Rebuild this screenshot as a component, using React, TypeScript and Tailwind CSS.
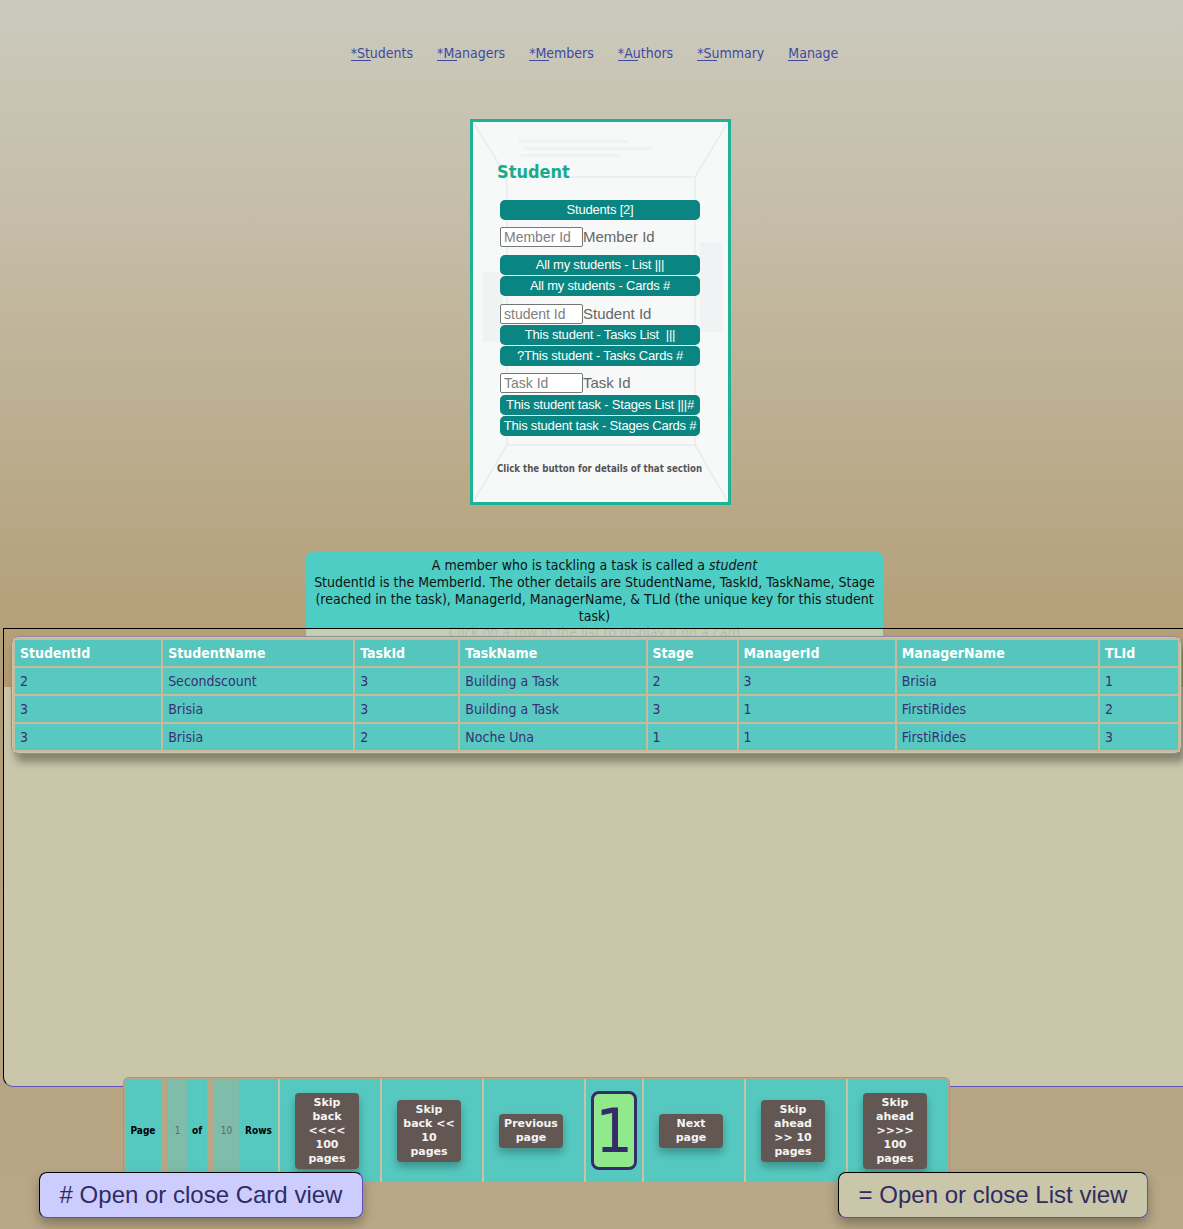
import React from "react";

const cols = [
  { h: "StudentId", w: 146 },
  { h: "StudentName", w: 190 },
  { h: "TaskId", w: 103 },
  { h: "TaskName", w: 185 },
  { h: "Stage", w: 89 },
  { h: "ManagerId", w: 156 },
  { h: "ManagerName", w: 201 },
  { h: "TLId", w: 78 },
];

const rows = [
  ["2", "Secondscount", "3", "Building a Task", "2", "3", "Brisia", "1"],
  ["3", "Brisia", "3", "Building a Task", "3", "1", "FirstiRides", "2"],
  ["3", "Brisia", "2", "Noche Una", "1", "1", "FirstiRides", "3"],
];

const nav = ["*Students", "*Managers", "*Members", "*Authors", "*Summary", "Manage"];

function CBtn({ children, className = "" }: { children: React.ReactNode; className?: string }) {
  return (
    <div
      className={
        "w-[200px] h-[20px] rounded-[5px] bg-[#0a8581] text-white text-[13px] leading-[20px] text-center tracking-[-0.2px] whitespace-pre [font-family:'Liberation_Sans',Arial,sans-serif] [font-stretch:normal] " +
        className
      }
    >
      {children}
    </div>
  );
}

function InRow({ ph, label, className = "" }: { ph: string; label: string; className?: string }) {
  return (
    <div className={"flex items-center h-[20px] " + className}>
      <input
        readOnly
        placeholder={ph}
        className="w-[83px] h-[20px] border border-[#767676] rounded-[2px] bg-white px-[3px] text-[14px] text-[#333] placeholder:text-[#808080] outline-none [font-family:'Liberation_Sans',Arial,sans-serif] [font-stretch:normal]"
      />
      <span className="text-[15px] leading-[20px] text-[#666] [font-family:'Liberation_Sans',Arial,sans-serif] [font-stretch:normal]">{label}</span>
    </div>
  );
}

function PBtn({ children }: { children: React.ReactNode }) {
  return (
    <div className="w-[64px] rounded-[4px] bg-[#625753] px-[5px] py-[3px] text-center text-[11px] leading-[14px] font-bold text-[#f4f4f4] shadow-[0_5px_8px_rgba(0,0,0,0.28)] [font-family:'DejaVu_Sans',Verdana,sans-serif] [font-stretch:normal]">
      {children}
    </div>
  );
}

function PCell({ children, w = "w-[100px] pr-[6px]" }: { children: React.ReactNode; w?: string }) {
  return <div className={w + " h-full bg-[#55c9c0] flex items-center justify-center"}>{children}</div>;
}

export default function App() {
  return (
    <div className="relative w-full h-[1229px] overflow-hidden bg-[linear-gradient(to_bottom,#cbcabd_0px,#c4bba5_250px,#b9aa89_480px,#b29b73_687px,#b6a380_1000px,#b8a887_1229px)] [font-family:'DejaVu_Sans_Condensed','DejaVu_Sans',sans-serif] [font-stretch:semi-condensed]">
      <div className="w-[1189px]">
        {/* nav */}
        <nav className="flex justify-center gap-[24px] pt-[45px] text-[14px] leading-[17px] text-[#3d4a9f]">
          {nav.map((n) => (
            <a key={n} className="relative cursor-pointer">
              {n}
              <span className="absolute left-0 bottom-[1px] w-[20px] h-px bg-[#3d4a9f]" />
            </a>
          ))}
        </nav>

        {/* card */}
        <div className="relative ml-[470px] mt-[57px] w-[261px] h-[386px] border-[3px] border-[#1db394] bg-[#f7f9f9]">
          <svg className="absolute inset-0" width="255" height="380" viewBox="0 0 255 380">
            <g stroke="#e6eeed" strokeWidth="1.5" fill="none">
              <line x1="0" y1="0" x2="34" y2="55" />
              <line x1="255" y1="0" x2="222" y2="55" />
              <line x1="0" y1="380" x2="34" y2="323" />
              <line x1="255" y1="380" x2="222" y2="323" />
              <rect x="34" y="55" width="188" height="268" />
            </g>
            <g fill="#f0f3f3">
              <rect x="45" y="18" width="110" height="3" />
              <rect x="50" y="25" width="130" height="3" />
              <rect x="48" y="32" width="100" height="3" />
              <rect x="10" y="150" width="20" height="70" />
              <rect x="227" y="120" width="22" height="90" />
            </g>
          </svg>
          <div className="relative pl-[27px] pt-[39px]">
            <h2 className="-ml-[3px] text-[18px] leading-[22px] font-bold text-[#17ab8c]">Student</h2>
            <CBtn className="mt-[17px]">Students [2]</CBtn>
            <InRow ph="Member Id" label="Member Id" className="mt-[7px]" />
            <CBtn className="mt-[8px]">All my students - List |||</CBtn>
            <CBtn className="mt-[1px]">All my students - Cards #</CBtn>
            <InRow ph="student Id" label="Student Id" className="mt-[8px]" />
            <CBtn className="mt-[1px]">This student - Tasks List  |||</CBtn>
            <CBtn className="mt-[1px]">?This student - Tasks Cards #</CBtn>
            <InRow ph="Task Id" label="Task Id" className="mt-[7px]" />
            <CBtn className="mt-[2px]">This student task - Stages List |||#</CBtn>
            <CBtn className="mt-[1px]">This student task - Stages Cards #</CBtn>
            <p className="-ml-[3px] mt-[27px] text-[9.6px] leading-[12px] font-bold text-[#555]">
              Click the button for details of that section
            </p>
          </div>
        </div>

        {/* info */}
        <div className="ml-[306px] mt-[47px] w-[577px] h-[76px] rounded-t-[6px] bg-[#4ecdc4] px-[5px] pt-[5px] text-center text-[14px] leading-[17px] text-[#111]">
          A member who is tackling a task is called a <i>student</i>
          <br />
          StudentId is the MemberId. The other details are StudentName, TaskId, TaskName, Stage (reached in the task), ManagerId,
          ManagerName, &amp; TLId (the unique key for this student task)
        </div>
        <div className="ml-[306px] w-[577px] h-[17px] bg-[#c3cfb4] text-center text-[14px] leading-[9px] text-black/10">
          Click on a row in the list to display it on a card
        </div>

        {/* list panel */}
        <div className="relative z-10 -mt-[17px] ml-[3px] w-[1200px] h-[459px] border border-black border-b-[#5d52b8] rounded-bl-[10px] bg-[linear-gradient(to_bottom,transparent_58px,#cac6aa_58px)] pl-[7px] pt-[7px]">
          <div className="w-[1171px] rounded-[8px] border border-[#8e8ea0] bg-[#cac6aa] p-[1px] shadow-[4px_8px_8px_rgba(0,0,0,0.35)]">
            <table className="w-full table-fixed border-separate border-spacing-[2px] bg-[#c9ba9b]">
              <colgroup>
                {cols.map((c) => (
                  <col key={c.h} style={{ width: c.w }} />
                ))}
              </colgroup>
              <thead>
                <tr>
                  {cols.map((c) => (
                    <th key={c.h} className="h-[26px] bg-[#55c6bd] px-[5px] text-left text-[14px] font-bold text-white">
                      {c.h}
                    </th>
                  ))}
                </tr>
              </thead>
              <tbody>
                {rows.map((r, i) => (
                  <tr key={i}>
                    {r.map((v, j) => (
                      <td key={j} className="h-[26px] bg-[#57c9c1] px-[5px] text-[14px] text-[#3b2f74]">
                        {v}
                      </td>
                    ))}
                  </tr>
                ))}
              </tbody>
            </table>
          </div>
        </div>

        {/* pagination */}
        <div className="relative z-20 -mt-[10px] ml-[123px] w-[827px] h-[110px] rounded-t-[6px] border border-b-0 border-[#9a9a9a] bg-[#b8a787] px-[1px] pt-[1px]">
          <div className="flex h-[103px] gap-[2px] bg-[#cdc1a4]">
            <div className="flex w-[153px] h-full bg-[#b8a787] text-[10px]">
              <div className="w-[36px] bg-[#55c9c0] flex items-center justify-center font-bold text-black">Page</div>
              <div className="w-[7px]" />
              <div className="w-[19px] bg-[#7fbcaa] flex items-center justify-center text-[#666]">1</div>
              <div className="w-[20px] bg-[#55c9c0] flex items-center justify-center font-bold text-black">of</div>
              <div className="w-[7px]" />
              <div className="w-[25px] bg-[#7fbcaa] flex items-center justify-center text-[#666]">10</div>
              <div className="w-[39px] bg-[#55c9c0] flex items-center justify-center font-bold text-black">Rows</div>
            </div>
            <PCell>
              <PBtn>Skip back &lt;&lt;&lt;&lt; 100 pages</PBtn>
            </PCell>
            <PCell>
              <PBtn>Skip back &lt;&lt; 10 pages</PBtn>
            </PCell>
            <PCell>
              <PBtn>Previous page</PBtn>
            </PCell>
            <PCell w="w-[56px]">
              <div className="w-[46px] h-[79px] rounded-[8px] border-[3px] border-[#372c6a] bg-[#90ea8c] flex items-center justify-center text-[60px] leading-none text-[#372c6a] [font-family:'DejaVu_Sans',sans-serif] [font-stretch:normal]">
                1
              </div>
            </PCell>
            <PCell>
              <PBtn>Next page</PBtn>
            </PCell>
            <PCell>
              <PBtn>Skip ahead &gt;&gt; 10 pages</PBtn>
            </PCell>
            <PCell>
              <PBtn>Skip ahead &gt;&gt;&gt;&gt; 100 pages</PBtn>
            </PCell>
          </div>
        </div>
      </div>

      {/* floating view buttons */}
      <button className="absolute left-[39px] top-[1172px] z-30 w-[324px] h-[46px] rounded-[8px] border border-black border-r-[#5c50c4] border-b-[#5c50c4] bg-[#ccccff] text-center text-[24px] leading-[44px] text-[#2f2c63] shadow-[0_6px_12px_rgba(0,0,0,0.3)] [font-family:'Liberation_Sans',Arial,sans-serif] [font-stretch:normal]">
        # Open or close Card view
      </button>
      <button className="absolute left-[838px] top-[1172px] z-30 w-[310px] h-[46px] rounded-[8px] border border-black border-r-[#5c50c4] border-b-[#5c50c4] bg-[#cac6aa] text-center text-[24px] leading-[44px] text-[#2f2c63] shadow-[0_6px_12px_rgba(0,0,0,0.3)] [font-family:'Liberation_Sans',Arial,sans-serif] [font-stretch:normal]">
        = Open or close List view
      </button>
    </div>
  );
}
